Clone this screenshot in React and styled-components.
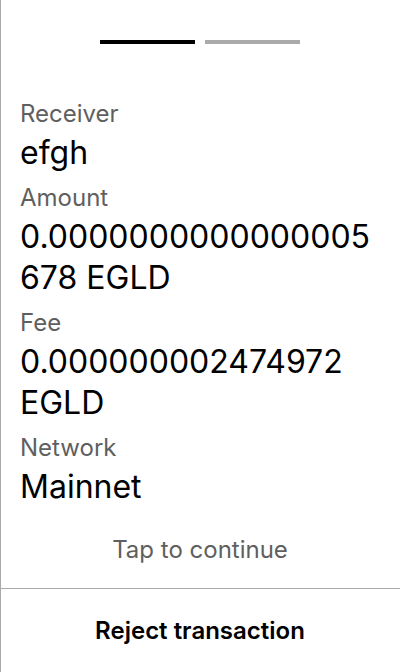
import styled, { createGlobalStyle } from 'styled-components';

const GlobalStyle = createGlobalStyle`
  html, body {
    margin: 0;
    padding: 0;
    background: #fff;
  }
  body {
    font-family: Inter, "Noto Sans", sans-serif;
    color: #000;
  }
`;

const Screen = styled.div`
  width: 400px;
  height: 672px;
  box-shadow: inset 1px 0 0 #aaa;
  display: flex;
  flex-direction: column;
`;

const Steps = styled.div`
  display: flex;
  justify-content: center;
  gap: 10px;
  padding-top: 40px;
`;

const Step = styled.div`
  width: 95px;
  height: 4px;
  background: ${(p) => (p.active ? '#000' : '#aaa')};
`;

const Details = styled.div`
  flex: 1;
  padding: 55px 20px 0 20px;
  display: flex;
  flex-direction: column;
  gap: 10px;
`;

const Field = styled.div`
  display: flex;
  flex-direction: column;
  gap: 4px;
`;

const Label = styled.div`
  font-size: 24px;
  line-height: 29px;
  color: #5f5f5f;
`;

const Value = styled.div`
  font-size: 32px;
  line-height: 41px;
  overflow-wrap: anywhere;
`;

const Hint = styled.div`
  text-align: center;
  font-size: 24px;
  line-height: 29px;
  color: #5f5f5f;
  padding-bottom: 24px;
`;

const Footer = styled.div`
  height: 83px;
  border-top: 1px solid #aaa;
  display: flex;
`;

const RejectButton = styled.button`
  flex: 1;
  border: none;
  background: transparent;
  font-family: Inter, "Noto Sans", sans-serif;
  font-size: 24px;
  font-weight: 600;
  color: #000;
  padding: 0;
`;

const fields = [
  { label: 'Receiver', value: 'efgh' },
  { label: 'Amount', value: '0.0000000000000005678 EGLD' },
  { label: 'Fee', value: '0.000000002474972 EGLD' },
  { label: 'Network', value: 'Mainnet' },
];

export default function App() {
  return (
    <>
      <GlobalStyle />
      <Screen>
        <Steps>
          <Step active />
          <Step />
        </Steps>
        <Details>
          {fields.map((f) => (
            <Field key={f.label}>
              <Label>{f.label}</Label>
              <Value>{f.value}</Value>
            </Field>
          ))}
        </Details>
        <Hint>Tap to continue</Hint>
        <Footer>
          <RejectButton>Reject transaction</RejectButton>
        </Footer>
      </Screen>
    </>
  );
}
